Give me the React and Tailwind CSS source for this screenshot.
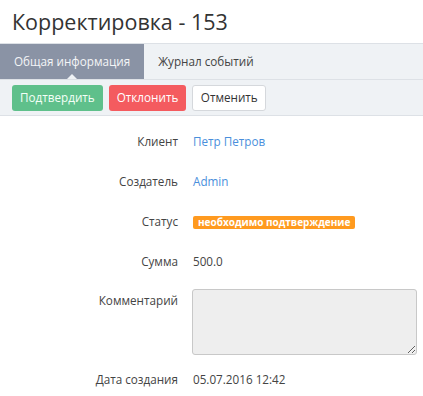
import { useState } from 'react';

const rows = [
  { label: 'Клиент', value: 'Петр Петров', kind: 'link' },
  { label: 'Создатель', value: 'Admin', kind: 'link' },
  { label: 'Статус', value: 'необходимо подтверждение', kind: 'badge' },
  { label: 'Сумма', value: '500.0', kind: 'text' },
];

export default function App() {
  const [tab, setTab] = useState(0);
  const [comment, setComment] = useState('');

  return (
    <div className="w-[423px] h-[396px] bg-white text-[11.7px] text-[#444] overflow-hidden" style={{ fontFamily: '"Open Sans", sans-serif' }}>
      <div className="h-[43px] flex items-center pl-[12px]">
        <h1 className="text-[21.5px] leading-none text-[#333]">Корректировка - 153</h1>
      </div>

      <div className="flex h-[37px] bg-[#eff2f5] border-t border-b border-[#dde1e6]">
        {['Общая информация', 'Журнал событий'].map((t, i) => (
          <button
            key={t}
            onClick={() => setTab(i)}
            className={`relative px-[14px] h-full flex items-center ${tab === i ? 'bg-[#8a93a5] text-[#f4f5f7]' : 'text-[#444]'}`}
          >
            {t}
            {tab === i && (
              <span className="absolute bottom-0 left-1/2 -translate-x-1/2 w-0 h-0 border-l-[5px] border-r-[5px] border-b-[5px] border-l-transparent border-r-transparent border-b-[#eff2f5]" />
            )}
          </button>
        ))}
      </div>

      <div className="flex items-center gap-[6px] h-[36px] px-[12px] bg-[#eff2f5] border-b border-[#dde1e6]">
        <button className="h-[26px] px-[8px] rounded-[3px] bg-[#5fc08b] text-[#f4fff7]">Подтвердить</button>
        <button className="h-[26px] px-[8px] rounded-[3px] bg-[#f45b5f] text-white">Отклонить</button>
        <button className="h-[26px] px-[7.5px] rounded-[3px] bg-white border border-[#d5d8dc] text-[#333]">Отменить</button>
      </div>

      <div className="flex flex-col pt-[16px]">
        {rows.map((r, i) => (
          <div key={r.label} className={`flex items-center h-[20px] ${i > 0 ? 'mt-[20px]' : ''}`}>
            <div className="w-[178px] text-right text-[#444]">{r.label}</div>
            <div className="pl-[15px]">
              {r.kind === 'link' && <a className="text-[#4a8fdc] cursor-pointer">{r.value}</a>}
              {r.kind === 'badge' && (
                <span className="inline-flex items-center h-[13px] px-[5px] rounded-[2px] bg-[#ff9a1f] text-white text-[10px] font-bold leading-none">{r.value}</span>
              )}
              {r.kind === 'text' && <span>{r.value}</span>}
            </div>
          </div>
        ))}

        <div className="flex mt-[17px]">
          <div className="w-[178px] text-right pt-[1px] leading-[20px]">Комментарий</div>
          <div className="pl-[14px]">
            <textarea
              value={comment}
              onChange={(e) => setComment(e.target.value)}
              className="block w-[225px] h-[66px] bg-[#eeeeee] border border-[#c8c8c8] rounded-[3px] outline-none"
            />
          </div>
        </div>

        <div className="flex items-center h-[20px] mt-[15px]">
          <div className="w-[178px] text-right">Дата создания</div>
          <div className="pl-[15px]">05.07.2016 12:42</div>
        </div>
      </div>
    </div>
  );
}
